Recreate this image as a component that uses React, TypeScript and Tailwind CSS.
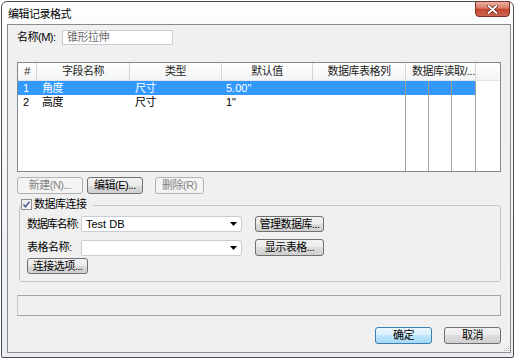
import React from "react"

const btn =
    "flex items-center justify-center whitespace-nowrap rounded-[3px] border border-[#707070] bg-[linear-gradient(#f2f2f2,#ebebeb_50%,#dddddd_50%,#cfcfcf)] text-black"
const btnOff =
    "flex items-center justify-center whitespace-nowrap rounded-[3px] border border-[#adb2b5] bg-[#f4f4f4] text-[#838383]"

function Combo({ value }: { value: string }) {
    return (
        <div className="flex h-[16px] w-[161px] shrink-0 items-center justify-between rounded-[2px] border border-[#c9ccd2] bg-white pl-[4px] pr-[4px]">
            <span className="tracking-normal">{value}</span>
            <svg width="7" height="4" viewBox="0 0 7 4">
                <path d="M0 0h7L3.5 4z" fill="#000" />
            </svg>
        </div>
    )
}

const rows = [
    { n: "1", name: "角度", type: "尺寸", def: "5.00\"", sel: true },
    { n: "2", name: "高度", type: "尺寸", def: "1\"", sel: false },
]

export default function App() {
    return (
        <div className="h-[359px] w-[517px] whitespace-nowrap bg-white pl-[1px] pt-[1px] font-['Liberation_Sans','Noto_Sans_CJK_SC',sans-serif] text-[11px] leading-none tracking-[-0.5px] text-black">
            <div className="flex h-[357px] w-[513px] flex-col rounded-t-[6px] rounded-b-[2px] border border-[#4c4c4c] bg-linear-to-b from-[#fdfdfd] to-[#e9edf2] pb-[4px] pl-[5px] pr-[2px]">
                {/* title bar */}
                <div className="flex h-[22px] items-start justify-between">
                    <span className="pl-[1px] pt-[7px]">编辑记录格式</span>
                    <div className="-mt-[1px] mr-[1px] flex h-[16px] w-[35px] items-center justify-center rounded-b-[4px] rounded-t-[2px] border border-[#7a3023] bg-[linear-gradient(#eab0a2,#d97a66_45%,#c4432b_50%,#cf6450)]">
                        <svg width="11" height="9" viewBox="0 0 11 9">
                            <path
                                d="M1.5 1l8 7M9.5 1l-8 7"
                                stroke="#5a2218"
                                strokeWidth="3.2"
                                strokeLinecap="round"
                            />
                            <path
                                d="M1.5 1l8 7M9.5 1l-8 7"
                                stroke="#fff"
                                strokeWidth="1.8"
                                strokeLinecap="round"
                            />
                        </svg>
                    </div>
                </div>

                {/* client area */}
                <div className="relative flex flex-1 flex-col border border-[#8a8a8a] bg-[#f0f0f0] px-[9px] pt-[5px]">
                    <div className="flex h-[15px] items-center">
                        <span className="w-[45px] shrink-0">名称(M):</span>
                        <div className="flex h-[15px] w-[111px] items-center border border-[#c9ccd2] bg-white pl-[4px] text-[#6d6d6d]">
                            锥形拉伸
                        </div>
                    </div>

                    {/* table */}
                    <div className="mt-[17px] flex h-[110px] flex-col border border-[#828790] bg-white">
                        <div className="grid h-[18px] grid-cols-[19px_93px_92px_91px_93px_70px_1fr] border-b border-[#e3e3e3] bg-linear-to-b from-white to-[#f3f4f5] text-[#1e1e1e]">
                            <div className="flex items-center justify-center border-r border-[#d5d5d5]">#</div>
                            <div className="flex items-center justify-center border-r border-[#d5d5d5]">字段名称</div>
                            <div className="flex items-center justify-center border-r border-[#d5d5d5]">类型</div>
                            <div className="flex items-center justify-center border-r border-[#d5d5d5]">默认值</div>
                            <div className="flex items-center justify-center border-r border-[#d5d5d5]">数据库表格列</div>
                            <div className="flex items-center overflow-hidden border-r border-[#d5d5d5] pl-[6px]">数据库读取/...</div>
                            <div />
                        </div>
                        {rows.map((r) => (
                            <div
                                key={r.n}
                                className={
                                    r.sel
                                        ? "grid h-[14px] grid-cols-[19px_93px_92px_91px_93px_23px_23px_24px_1fr] text-white"
                                        : "grid h-[14px] grid-cols-[19px_93px_92px_91px_93px_23px_23px_24px_1fr] text-black"
                                }
                            >
                                <div className={r.sel ? "flex items-center bg-[#3399ff] pl-[5px]" : "flex items-center pl-[5px]"}>{r.n}</div>
                                <div className={r.sel ? "flex items-center bg-[#3399ff] pl-[5px]" : "flex items-center pl-[5px]"}>{r.name}</div>
                                <div className={r.sel ? "flex items-center bg-[#3399ff] pl-[5px]" : "flex items-center pl-[5px]"}>{r.type}</div>
                                <div className={r.sel ? "flex items-center bg-[#3399ff] pl-[4px] tracking-normal" : "flex items-center pl-[4px] tracking-normal"}>{r.def}</div>
                                <div className={r.sel ? "border-r border-[#a0a0a0] bg-[#3399ff]" : "border-r border-[#a0a0a0]"} />
                                <div className={r.sel ? "border-r border-[#a0a0a0] bg-[#3399ff]" : "border-r border-[#a0a0a0]"} />
                                <div className={r.sel ? "border-r border-[#a0a0a0] bg-[#3399ff]" : "border-r border-[#a0a0a0]"} />
                                <div className={r.sel ? "border-r border-[#a0a0a0] bg-[#3399ff]" : "border-r border-[#a0a0a0]"} />
                                <div />
                            </div>
                        ))}
                        <div className="grid flex-1 grid-cols-[19px_93px_92px_91px_93px_23px_23px_24px_1fr]">
                            <div />
                            <div />
                            <div />
                            <div />
                            <div className="border-r border-[#a0a0a0]" />
                            <div className="border-r border-[#a0a0a0]" />
                            <div className="border-r border-[#a0a0a0]" />
                            <div className="border-r border-[#a0a0a0]" />
                            <div />
                        </div>
                    </div>

                    {/* table buttons */}
                    <div className="mt-[5px] flex h-[17px]">
                        <div className={`${btnOff} w-[66px]`}>新建(N)...</div>
                        <div className={`${btn} ml-[4px] w-[56px]`}>编辑(E)...</div>
                        <div className={`${btnOff} ml-[12px] w-[49px]`}>删除(R)</div>
                    </div>

                    {/* database group */}
                    <div className="relative ml-[2px] mt-[11px] flex flex-col rounded-[3px] border border-[#c5c5c5] pb-[7px] pl-[7px] pt-[10px]">
                        <div className="absolute -top-[7px] left-[1px] flex items-center gap-[2px] bg-[#f0f0f0] pr-[6px]">
                            <div className="flex h-[11px] w-[11px] items-center justify-center border border-[#8f8f8f] bg-linear-to-br from-[#e6e6e6] to-white">
                                <svg width="9" height="9" viewBox="0 0 9 9">
                                    <path d="M1.5 4.5l2 2.2 4-5" fill="none" stroke="#4a5f97" strokeWidth="1.6" />
                                </svg>
                            </div>
                            <span>数据库连接</span>
                        </div>
                        <div className="flex items-center">
                            <span className="w-[54px] shrink-0 tracking-[-1.2px]">数据库名称:</span>
                            <Combo value="Test DB" />
                            <div className={`${btn} ml-[13px] h-[16px] w-[69px]`}>管理数据库...</div>
                        </div>
                        <div className="mt-[7px] flex items-center">
                            <span className="w-[54px] shrink-0">表格名称:</span>
                            <Combo value="" />
                            <div className={`${btn} ml-[13px] h-[17px] w-[69px]`}>显示表格...</div>
                        </div>
                        <div className={`${btn} mt-[2px] h-[16px] w-[61px]`}>连接选项...</div>
                    </div>

                    {/* status box */}
                    <div className="mt-[13px] h-[21px] border border-[#a5a5a5] border-l-[#c8c8c8]" />

                    {/* dialog buttons */}
                    <div className="mt-[11px] flex justify-end gap-[12px]">
                        <div className="flex h-[17px] w-[57px] items-center justify-center rounded-[3px] border border-[#3c7fb1] bg-[linear-gradient(#eaf6fd,#d9f0fc_50%,#bee6fd_50%,#a7d9f5)]">
                            确定
                        </div>
                        <div className={`${btn} h-[17px] w-[57px]`}>取消</div>
                    </div>

                    {/* resize grip */}
                    <div className="absolute bottom-[1px] right-[1px] grid grid-cols-3 gap-[1px]">
                        <div className="h-[1px] w-[1px]" />
                        <div className="h-[1px] w-[1px]" />
                        <div className="h-[1px] w-[1px] bg-[#b0b0b0]" />
                        <div className="h-[1px] w-[1px]" />
                        <div className="h-[1px] w-[1px] bg-[#b0b0b0]" />
                        <div className="h-[1px] w-[1px] bg-[#b0b0b0]" />
                        <div className="h-[1px] w-[1px] bg-[#b0b0b0]" />
                        <div className="h-[1px] w-[1px] bg-[#b0b0b0]" />
                        <div className="h-[1px] w-[1px] bg-[#b0b0b0]" />
                    </div>
                </div>
            </div>
        </div>
    )
}
